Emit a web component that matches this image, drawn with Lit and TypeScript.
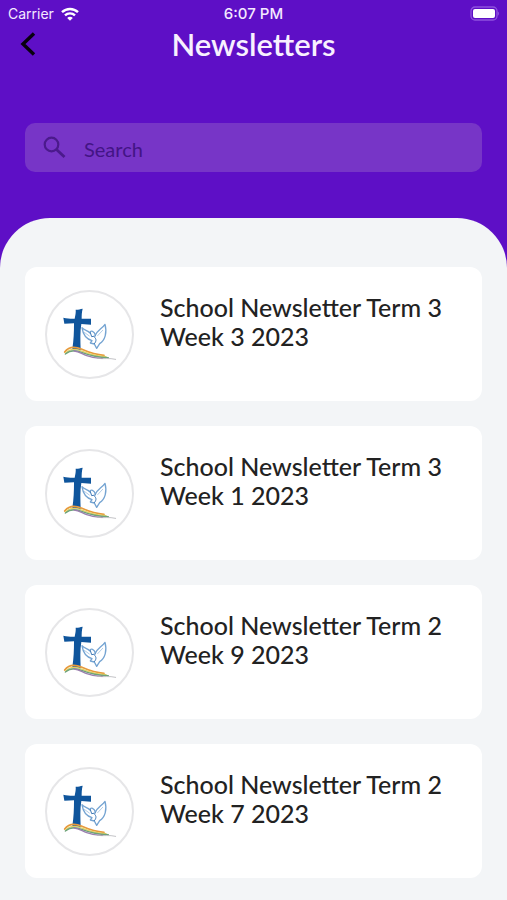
import { LitElement, html, css } from "lit";
import { customElement } from "lit/decorators.js";

@customElement("status-bar")
class StatusBar extends LitElement {
  static styles = css`
    :host {
      display: grid;
      grid-template-columns: 1fr auto 1fr;
      align-items: center;
      height: 27px;
      padding: 0 8px;
      color: #f4e9ff;
      font: 400 14px/27px "Liberation Sans", sans-serif;
      font-family: Inter, "Liberation Sans", sans-serif;
    }
    .carrier {
      display: flex;
      align-items: center;
      gap: 7px;
    }
    .time {
      font-weight: 500;
      font-size: 15px;
    }
    .battery {
      justify-self: end;
    }
    svg {
      display: block;
    }
  `;

  render() {
    return html`
      <span class="carrier">
        <span>Carrier</span>
        <svg width="18" height="14" viewBox="0 0 18 14" fill="none" stroke="#fff" stroke-width="2.4">
          <path d="M1 5.2C5.5.9 12.5.9 17 5.2" />
          <path d="M4 8.4C6.8 5.7 11.2 5.7 14 8.4" />
          <path d="M9 13.7 6.2 10.9C7.8 9.5 10.2 9.5 11.8 10.9Z" fill="#fff" stroke="none" />
        </svg>
      </span>
      <span class="time">6:07 PM</span>
      <svg class="battery" width="30" height="15" viewBox="0 0 30 15">
        <rect x="2" y="1" width="26" height="13" rx="4" fill="none" stroke="#8f52de" stroke-width="1.3" />
        <rect x="4" y="3" width="22" height="9" rx="2" fill="#fff" />
        <path d="M28.6 5.2c1.800.9 1.800 3.700 0 4.600z" fill="#8f52de" />
      </svg>
    `;
  }
}

@customElement("newsletter-card")
class NewsletterCard extends LitElement {
  static properties = { heading: { type: String } };
  declare heading: string;

  static styles = css`
    :host {
      display: block;
    }
    .card {
      display: flex;
      align-items: flex-start;
      gap: 26px;
      padding: 23px 20px 22px;
      border-radius: 12px;
      background: #fff;
      color: #222;
      text-decoration: none;
    }
    .crest {
      flex: none;
      display: block;
      width: 89px;
      height: 89px;
      box-sizing: border-box;
      border: 2px solid #e6e6e8;
      border-radius: 50%;
    }
    .heading {
      margin: 0;
      padding-top: 3px;
      font: 500 25px/29px Lato, "Liberation Sans", sans-serif;
    }
  `;

  render() {
    return html`
      <a class="card" href="#">
        <svg class="crest" viewBox="-39 -24 255 255" aria-hidden="true">
          <path
            d="M47 29C53 30 60 27 68 26C65 37 65 47 65 56L93 56V74L64 72C60 96 61 121 62 150L37 147C41 121 42 98 42 70L13 71 10 53C22 55 33 57 44 56C46 46 48 37 47 29Z"
            fill="#0f559c"
          />
          <g fill="#fff" stroke-linejoin="round" stroke-linecap="round">
            <path
              d="M66 83C69 104 78 117 96 122L91 129 103 132 110 145 119 131C135 121 142 98 135 73C126 86 112 91 106 106C104 94 91 88 90 99C82 91 73 91 66 83Z"
              stroke="#75a4d2"
              stroke-width="4"
            />
            <path
              d="M91 98 95 110 106 108M104 112C110 117 109 125 103 131"
              fill="none"
              stroke="#3d78b5"
              stroke-width="3"
            />
            <path d="M128 91 113 107M73 97 88 108" fill="none" stroke="#b3cde6" stroke-width="3" />
          </g>
          <g fill="none" stroke-linecap="round">
            <path d="M14 156C28 137 48 140 66 148S100 164 132 166" stroke="#e79a3c" stroke-width="5" />
            <path d="M17 159C31 144 48 146 65 153S101 168 138 170" stroke="#e4d264" stroke-width="4" />
            <path d="M16 162C32 149 47 150 65 157S102 172 145 173" stroke="#6ea37b" stroke-width="4" />
            <path d="M42 153C57 153 66 162 80 167S112 176 128 175" stroke="#9a7fae" stroke-width="4" />
            <path d="M112 175C130 178 148 173 167 178" stroke="#b7b7bb" stroke-width="2.5" />
          </g>
        </svg>
        <h2 class="heading">${this.heading}</h2>
      </a>
    `;
  }
}

@customElement("app-root")
class AppRoot extends LitElement {
  static styles = css`
    :host {
      display: flex;
      flex-direction: column;
      min-height: 100vh;
      background: #5e0fc6;
      font-family: Lato, "Liberation Sans", sans-serif;
    }
    .bar {
      display: grid;
      grid-template-columns: 56px 1fr 56px;
      align-items: center;
      height: 34px;
    }
    .back {
      width: 56px;
      height: 34px;
      padding: 0 0 0 20px;
      border: 0;
      background: none;
    }
    .back svg,
    .lens {
      display: block;
      flex: none;
    }
    .title {
      margin: 0;
      color: #f8f0ff;
      font-weight: 600;
      font-size: 31px;
      line-height: 34px;
      text-align: center;
    }
    .search {
      display: flex;
      align-items: center;
      gap: 18px;
      height: 49px;
      margin: 62px 25px 46px;
      padding: 0 18px;
      box-sizing: border-box;
      border-radius: 10px;
      background: #7735c7;
    }
    .field {
      flex: 1;
      min-width: 0;
      padding: 2px 0 0;
      border: 0;
      outline: 0;
      background: none;
      color: #3f1180;
      font: 400 20px/24px Lato, "Liberation Sans", sans-serif;
    }
    .field::placeholder {
      color: #431485;
      opacity: 1;
    }
    .panel {
      flex: 1;
      padding: 49px 25px 22px;
      border-radius: 50px 50px 0 0;
      background: #f3f5f7;
    }
    .list {
      display: grid;
      gap: 25px;
      margin: 0;
      padding: 0;
      list-style: none;
    }
  `;

  private items = [
    "School Newsletter Term 3 Week 3 2023",
    "School Newsletter Term 3 Week 1 2023",
    "School Newsletter Term 2 Week 9 2023",
    "School Newsletter Term 2 Week 7 2023",
  ];

  render() {
    return html`
      <status-bar></status-bar>
      <header class="bar">
        <button class="back" aria-label="Back">
          <svg width="16" height="24" viewBox="0 0 16 24" fill="none" stroke="#08010f" stroke-width="3.4">
            <path d="M14 1.5 3 12 14 22.5" />
          </svg>
        </button>
        <h1 class="title">Newsletters</h1>
      </header>
      <label class="search">
        <svg class="lens" width="23" height="23" viewBox="0 0 23 23" fill="none" stroke="#4b1a8c">
          <circle cx="8.5" cy="8.5" r="6.8" stroke-width="2.2" />
          <path d="M13.5 13.5 21.5 21" stroke-width="2.8" />
        </svg>
        <input class="field" type="search" placeholder="Search" aria-label="Search" />
      </label>
      <main class="panel">
        <ul class="list">
          ${this.items.map((t) => html`<li><newsletter-card .heading=${t}></newsletter-card></li>`)}
        </ul>
      </main>
    `;
  }
}
